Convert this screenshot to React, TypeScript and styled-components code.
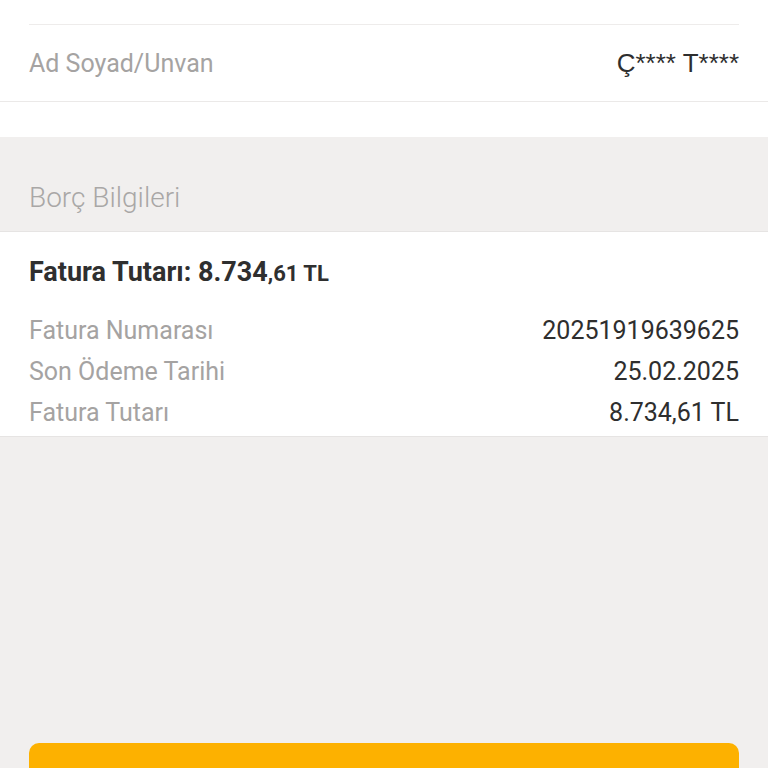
import React from 'react';
import styled, { createGlobalStyle } from 'styled-components';

const GlobalStyle = createGlobalStyle`
  html, body {
    margin: 0;
    padding: 0;
    background: #f1efee;
    font-family: Roboto, "Noto Sans", sans-serif;
  }
`;

const Page = styled.div`
  width: 768px;
  height: 768px;
  overflow: hidden;
  display: flex;
  flex-direction: column;
  background: #f1efee;
`;

const TopSection = styled.section`
  background: #ffffff;
  padding: 0 29px;
  height: 101px;
  border-bottom: 1px solid #ebe9e8;
  display: flex;
  flex-direction: column;
`;

const Divider = styled.div`
  height: 1px;
  margin-top: 24px;
  background: #eeeceb;
`;

const NameRow = styled.div`
  flex: 1;
  display: flex;
  align-items: center;
  justify-content: space-between;
  padding-top: 1px;
`;

const Spacer = styled.div`
  height: 35px;
  background: #ffffff;
`;

const SectionHeader = styled.div`
  height: 95px;
  padding: 26px 29px 0;
  display: flex;
  align-items: center;
  box-sizing: border-box;
  border-bottom: 1px solid #e6e4e3;
  font-size: 28px;
  font-weight: 300;
  color: #a9a7a6;
`;

const Card = styled.section`
  background: #ffffff;
  padding: 25px 29px 3px;
  border-bottom: 1px solid #e6e4e3;
`;

const Total = styled.div`
  font-size: 27px;
  line-height: 30px;
  font-weight: 700;
  color: #2f2f2f;
  margin-bottom: 21px;
`;

const Small = styled.span`
  font-size: 22px;
`;

const Row = styled.div`
  display: flex;
  justify-content: space-between;
  align-items: center;
  height: 41px;
`;

const Label = styled.span`
  font-size: 25px;
  color: #a5a3a2;
`;

const Value = styled.span<{ $mono?: boolean }>`
  font-size: ${(p) => (p.$mono ? '26px' : '25px')};
  color: #2e2e2e;
  font-family: ${(p) => (p.$mono ? '"Liberation Sans", Arial, sans-serif' : 'Roboto, sans-serif')};
`;

const Fill = styled.div`
  flex: 1;
  display: flex;
  flex-direction: column;
  justify-content: flex-end;
  padding: 0 29px;
`;

const PayButton = styled.button`
  height: 25px;
  border: none;
  border-radius: 10px 10px 0 0;
  background: #fdb100;
  cursor: pointer;
`;

export default function App() {
  const rows = [
    { label: 'Fatura Numarası', value: '20251919639625' },
    { label: 'Son Ödeme Tarihi', value: '25.02.2025' },
    { label: 'Fatura Tutarı', value: '8.734,61 TL' },
  ];
  return (
    <Page>
      <GlobalStyle />
      <TopSection>
        <Divider />
        <NameRow>
          <Label>Ad Soyad/Unvan</Label>
          <Value $mono>Ç**** T****</Value>
        </NameRow>
      </TopSection>
      <Spacer />
      <SectionHeader>Borç Bilgileri</SectionHeader>
      <Card>
        <Total>
          Fatura Tutarı: 8.734<Small>,61 TL</Small>
        </Total>
        {rows.map((r) => (
          <Row key={r.label}>
            <Label>{r.label}</Label>
            <Value>{r.value}</Value>
          </Row>
        ))}
      </Card>
      <Fill>
        <PayButton aria-label="Öde" />
      </Fill>
    </Page>
  );
}
